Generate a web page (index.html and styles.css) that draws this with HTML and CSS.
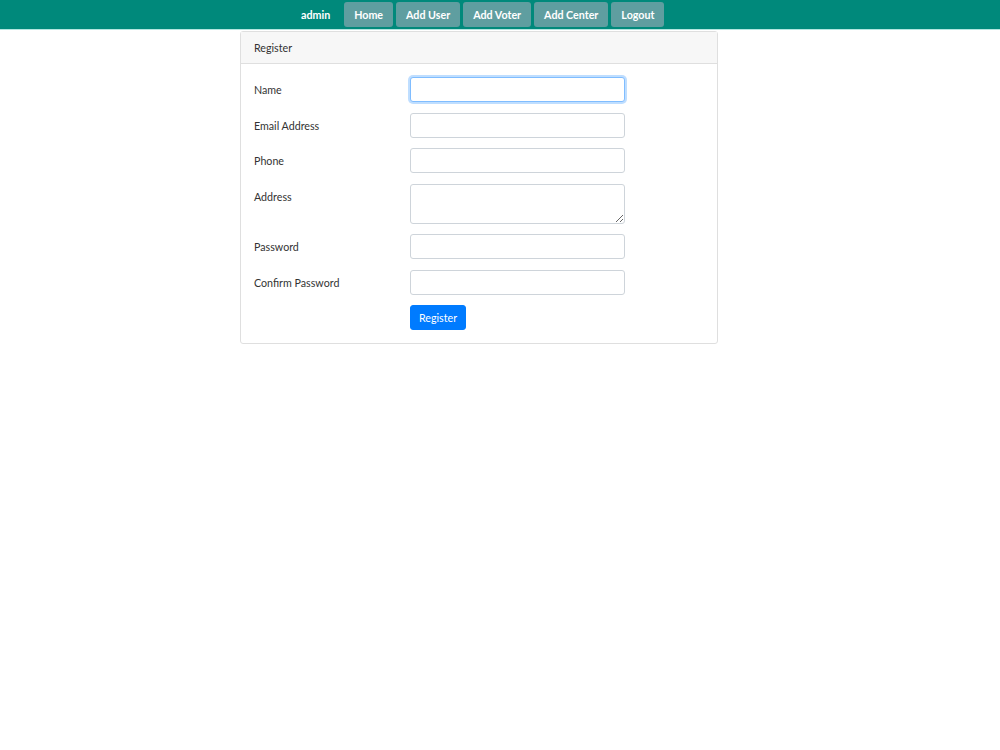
FILE: index.html
```html
<!DOCTYPE html>
<html lang="en">
  <head>
    <title>Register</title>
    <meta charset="UTF-8" />
    <meta name="viewport" content="width=device-width, initial-scale=1.0" />
    <link rel="stylesheet" href="styles.css">
  </head>
  <body>
    <nav class="topnav">
      <div class="nav-inner">
        <span class="nav-user">admin</span>
        <a class="nav-link" href="#">Home</a>
        <a class="nav-link" href="#">Add User</a>
        <a class="nav-link" href="#">Add Voter</a>
        <a class="nav-link" href="#">Add Center</a>
        <a class="nav-link" href="#">Logout</a>
      </div>
    </nav>

    <div class="card">
      <div class="card-header">Register</div>
      <form class="card-body">
        <div class="form-row">
          <label for="name">Name</label>
          <input type="text" id="name" class="form-control focused">
        </div>
        <div class="form-row">
          <label for="email">Email Address</label>
          <input type="email" id="email" class="form-control">
        </div>
        <div class="form-row">
          <label for="phone">Phone</label>
          <input type="text" id="phone" class="form-control">
        </div>
        <div class="form-row">
          <label for="address">Address</label>
          <textarea id="address" class="form-control textarea"></textarea>
        </div>
        <div class="form-row">
          <label for="password">Password</label>
          <input type="password" id="password" class="form-control">
        </div>
        <div class="form-row">
          <label for="confirm">Confirm Password</label>
          <input type="password" id="confirm" class="form-control">
        </div>
        <div class="form-row last">
          <span class="spacer"></span>
          <button type="submit" class="btn-primary">Register</button>
        </div>
      </form>
    </div>
  </body>
</html>
```

FILE: styles.css
```css
* {
  margin: 0;
  padding: 0;
  box-sizing: border-box;
}

body {
  font-family: Lato, 'Open Sans', sans-serif;
  font-size: 10.7px;
  color: #212529;
  background: #fff;
}

.topnav {
  background: #00897b;
  height: 30px;
  border-bottom: 1px solid #b2e6e0;
}

.nav-inner {
  display: flex;
  align-items: center;
  height: 29px;
  padding-left: 290px;
  gap: 3px;
}

.nav-user {
  color: #fff;
  font-weight: 700;
  padding-left: 11px;
  margin-right: 11px;
}

.nav-link {
  color: #fff;
  font-weight: 700;
  text-decoration: none;
  background: #5f9ea0;
  border-radius: 3px;
  height: 25px;
  padding: 0 10px;
  display: flex;
  align-items: center;
}

.card {
  width: 478px;
  margin: 1px 0 0 240px;
  border: 1px solid #dfdfdf;
  border-radius: 3px;
}

.card-header {
  background: #f7f7f7;
  border-bottom: 1px solid #dfdfdf;
  height: 32px;
  padding: 0 13px;
  display: flex;
  align-items: center;
  color: #333;
}

.card-body {
  padding: 13px;
}

.form-row {
  display: flex;
  align-items: flex-start;
  margin-bottom: 10.5px;
}

.form-row.last {
  margin-bottom: 0;
}

.form-row label,
.form-row .spacer {
  width: 156px;
  flex-shrink: 0;
  padding-top: 6px;
  color: #333;
}

.form-control {
  width: 215px;
  height: 25px;
  border: 1px solid #ced4da;
  border-radius: 3px;
  font: inherit;
  padding: 0 8px;
  background: #fff;
}

.form-control.focused {
  border-color: #80bdff;
  box-shadow: 0 0 0 2px rgba(0, 123, 255, 0.25);
}

.textarea {
  height: 40px;
  resize: vertical;
  display: block;
}

.btn-primary {
  font: inherit;
  color: #fff;
  background: #007bff;
  border: 1px solid #007bff;
  border-radius: 3px;
  height: 25px;
  padding: 0 8px;
  cursor: pointer;
}
```
